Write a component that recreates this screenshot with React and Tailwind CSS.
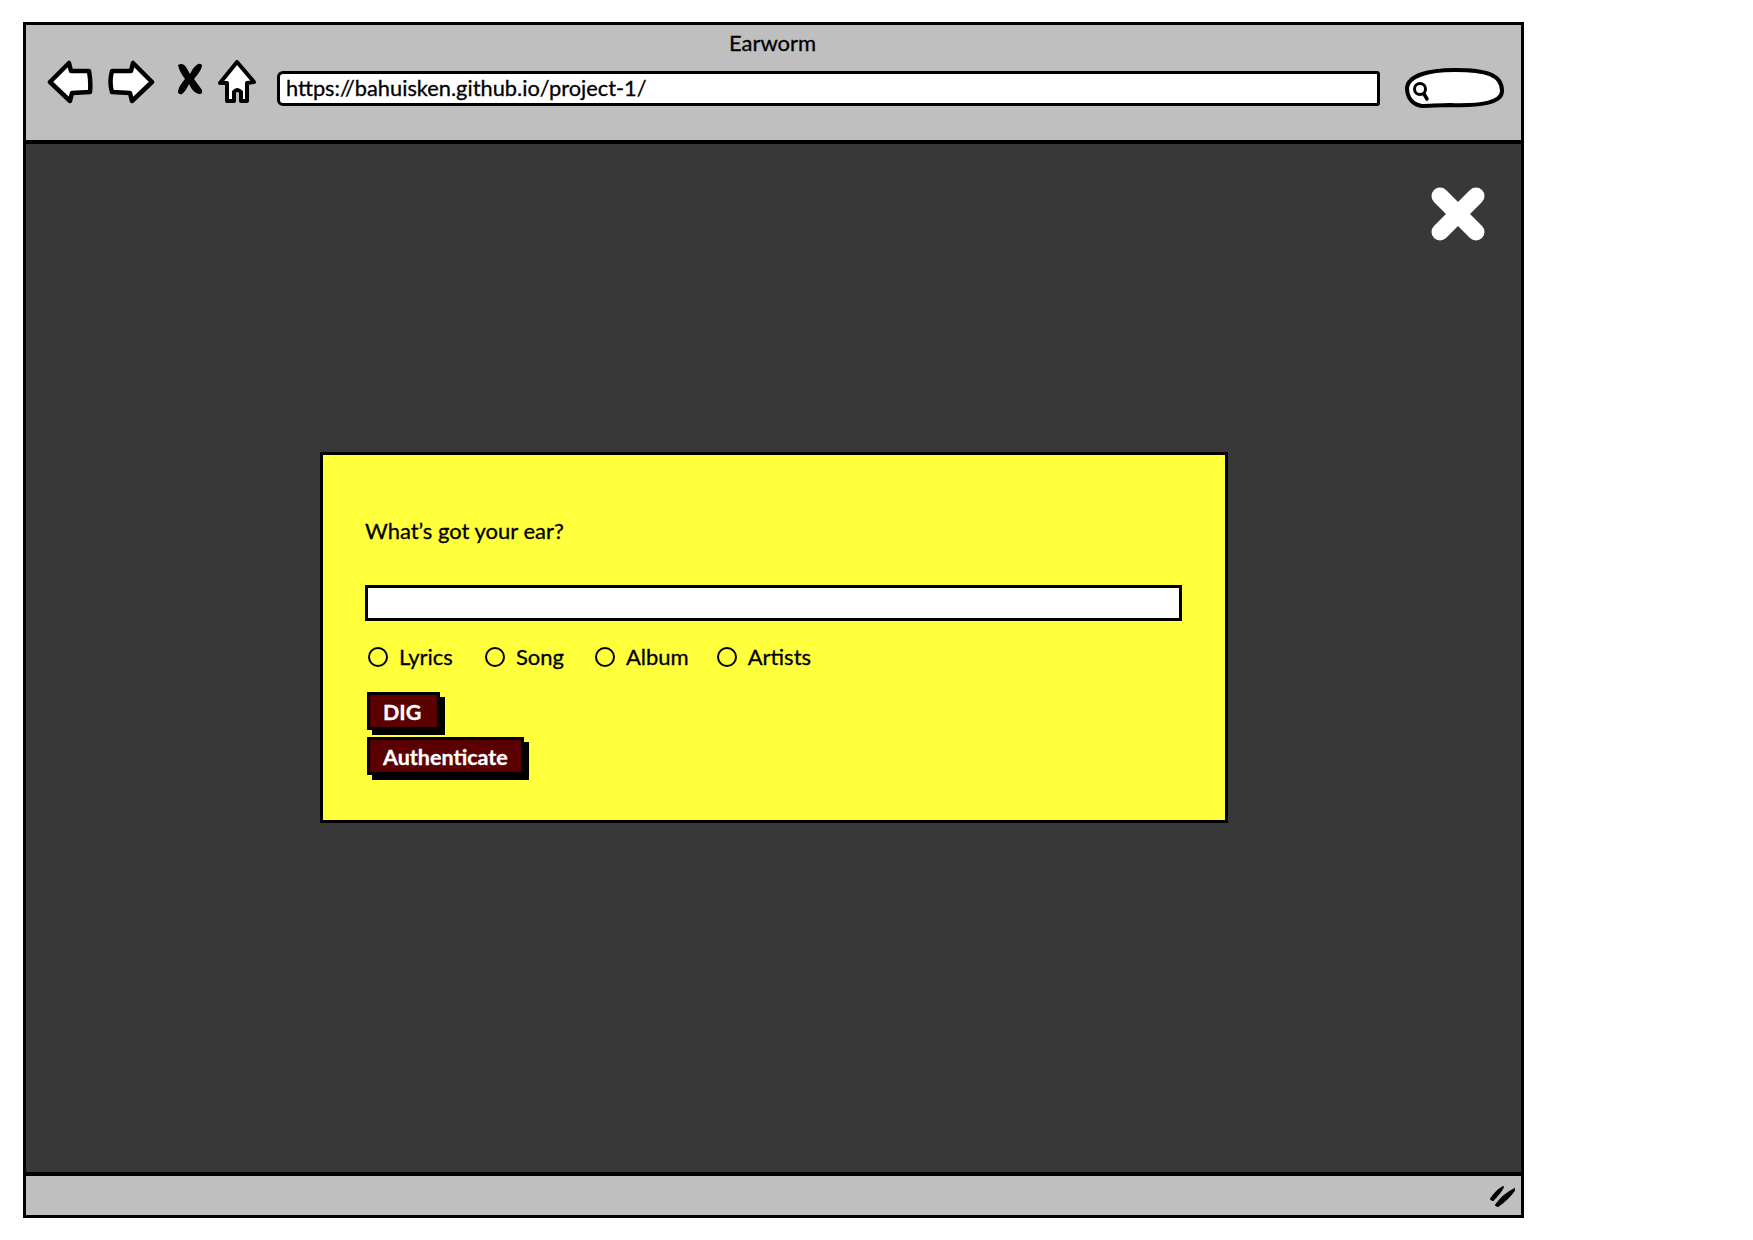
const FONT = "font-['Lato','Open_Sans',sans-serif] [-webkit-text-stroke:0.3px]";

function BackIcon() {
  return (
    <svg width="46" height="44" viewBox="0 0 46 44" className="shrink-0">
      <path d="M3 22 L22 3 L24 11 L42 11 Q44 22 43 32 L25 33 L23 41 Z" fill="#fff" stroke="#000" strokeWidth="4.5" strokeLinejoin="round" />
    </svg>
  );
}

function ForwardIcon() {
  return (
    <svg width="48" height="44" viewBox="0 0 48 44" className="shrink-0">
      <path d="M45 22 L26 3 L24 11 L5 11 Q2 22 5 32 L23 33 L25 41 Z" fill="#fff" stroke="#000" strokeWidth="4.5" strokeLinejoin="round" />
    </svg>
  );
}

function StopIcon() {
  return (
    <svg width="26" height="32" viewBox="0 0 26 32" className="shrink-0">
      <path d="M1 2 Q6 -1 9 4 L13 11 Q17 3 21 1 Q25 0 25 3 Q24 8 17 16 L25 27 Q26 31 22 31 Q16 30 12 21 Q9 28 5 31 Q1 32 1 28 Q2 23 8 16 Q2 8 1 2 Z" fill="#000" />
    </svg>
  );
}

function HomeIcon() {
  return (
    <svg width="38" height="44" viewBox="0 0 38 44" className="shrink-0">
      <path d="M19 2 L36 22 L29 23 L29 41 L23 41 L23 32 Q19 28 16 32 L16 41 L9 41 L9 23 L2 23 Z" fill="#fff" stroke="#000" strokeWidth="4" strokeLinejoin="round" />
    </svg>
  );
}

function CloseIcon() {
  return (
    <svg width="56" height="56" viewBox="0 0 56 56" className="shrink-0">
      <path d="M10 10 L46 46 M46 10 L10 46" stroke="#fff" strokeWidth="17" strokeLinecap="round" />
    </svg>
  );
}

function SearchPill() {
  return (
    <svg width="100" height="40" viewBox="0 0 100 40" className="shrink-0">
      <path d="M2 20 C3 8 22 2 50 2 C80 2 97 6 97 23 C97 35 75 38 45 37 C35 37 24 38 17 38 C8 37 2 30 2 20 Z" fill="#fff" stroke="#000" strokeWidth="4" />
      <circle cx="15" cy="21" r="5.5" fill="none" stroke="#000" strokeWidth="3" />
      <path d="M19 26 L22 31" stroke="#000" strokeWidth="3.5" strokeLinecap="round" />
    </svg>
  );
}

function GripIcon() {
  return (
    <svg width="26" height="22" viewBox="0 0 26 22" className="shrink-0">
      <path d="M2 14 Q7 6 14 2 Q12 7 4 15 Z M7 20 Q14 10 26 4 Q20 13 9 21 Z" fill="#000" stroke="#000" strokeWidth="2" strokeLinejoin="round" />
    </svg>
  );
}

function Radio({ label, className }) {
  return (
    <label className={`flex items-center ${className}`}>
      <span className="h-[20px] w-[20px] shrink-0 rounded-full border-2 border-black" />
      <span className="ml-[11px] text-[22px] leading-[26px] text-black">{label}</span>
    </label>
  );
}

function ActionButton({ children, className }) {
  return (
    <button className={`flex h-[38px] items-center border-[3px] border-black bg-[#5a0000] pl-[13px] pt-[3px] text-[21.5px] font-bold leading-none text-white shadow-[5px_5px_0_#000] ${className}`}>
      {children}
    </button>
  );
}

export default function App() {
  return (
    <div className={`min-h-[1240px] bg-white pl-[23px] pt-[22px] ${FONT}`}>
      <div className="flex h-[1196px] w-[1501px] flex-col border-[3px] border-black bg-[#bfbfbf]">
        {/* Browser chrome */}
        <header className="h-[119px] shrink-0 border-b-[4px] border-black">
          <div className="pt-[5px] pr-[2px] text-center text-[22px] leading-[26px] text-black">Earworm</div>
          <div className="mt-[4px] flex items-start pl-[21px]">
            <BackIcon />
            <div className="ml-[14px]"><ForwardIcon /></div>
            <div className="ml-[22px] mt-[3px]"><StopIcon /></div>
            <div className="ml-[15px]"><HomeIcon /></div>
            <div className="ml-[21px] mt-[11px] flex h-[35px] w-[1103px] items-center rounded-l-[6px] rounded-r-[3px] border-[3px] border-black bg-white pl-[6px] text-[21.8px] text-black">
              https://bahuisken.github.io/project-1/
            </div>
            <div className="ml-[25px] mt-[8px]"><SearchPill /></div>
          </div>
        </header>

        {/* Page area */}
        <main className="flex flex-1 flex-col bg-[#383838]">
          <div className="flex justify-end pr-[35px] pt-[42px]">
            <CloseIcon />
          </div>
          <section className="ml-[294px] mt-[210px] h-[371px] w-[908px] border-[3px] border-black bg-[#ffff3c] pl-[42px] pr-[42px] pt-[63px]">
            <p className="text-[22px] leading-[26px] text-black">What’s got your ear?</p>
            <div className="mt-[41px] h-[36px] w-[817px] border-[3px] border-black bg-white" />
            <div className="ml-[3px] mt-[23px] flex h-[26px] items-center">
              <Radio label="Lyrics" />
              <Radio label="Song" className="ml-[32px]" />
              <Radio label="Album" className="ml-[31px]" />
              <Radio label="Artists" className="ml-[28px]" />
            </div>
            <ActionButton className="ml-[2px] mt-[22px] w-[73px]">DIG</ActionButton>
            <ActionButton className="ml-[2px] mt-[7px] w-[157px]">Authenticate</ActionButton>
          </section>
        </main>

        {/* Status bar */}
        <footer className="flex h-[43px] shrink-0 items-center justify-end border-t-[4px] border-black pr-[6px]">
          <GripIcon />
        </footer>
      </div>
    </div>
  );
}
